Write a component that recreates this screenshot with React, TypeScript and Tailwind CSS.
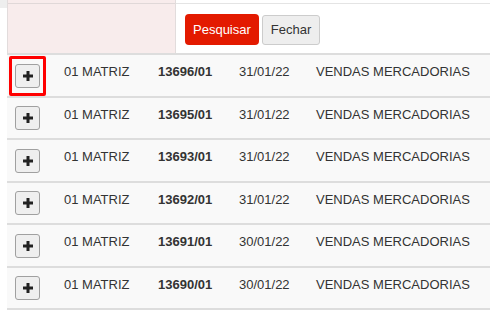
import React from 'react';

const rows = [
  { num: '13696/01', date: '31/01/22' },
  { num: '13695/01', date: '31/01/22' },
  { num: '13693/01', date: '31/01/22' },
  { num: '13692/01', date: '31/01/22' },
  { num: '13691/01', date: '30/01/22' },
  { num: '13690/01', date: '30/01/22' },
];

const PlusIcon = () => (
  <svg width="10" height="10" viewBox="0 0 10 10" className="block">
    <path d="M3.5 0h3v3.5H10v3H6.5V10h-3V6.5H0v-3h3.5z" fill="#222" />
  </svg>
);

export default function App() {
  return (
    <div className="relative w-[490px] h-[315px] overflow-hidden bg-white text-[13px] leading-[18.57px] text-[#333]" style={{ fontFamily: '"Liberation Sans", Arial, sans-serif' }}>
      <div className="flex">
        <div className="w-[7px] shrink-0">
          <div className="h-[8px] bg-[#eeeeee]" />
        </div>
        <div className="flex-1 min-w-0">
          {/* header */}
          <div className="flex h-[55px] border-b-2 border-[#dddddd]">
            <div className="w-[169px] shrink-0 bg-[#f8ecec] border-l border-r border-[#e2dcdc] pt-[3px]">
              <div className="h-full border-t border-[#e0d8d8]" />
            </div>
            <div className="flex-1 pt-[3px]">
              <div className="h-full border-t border-[#e4e4e4] pl-[9px] pt-[10px] flex items-start gap-[3px]">
                <button className="h-[31px] px-[8px] rounded-[4px] bg-[#e31a00] text-white leading-[31px]">Pesquisar</button>
                <button className="h-[30px] mt-px px-[8px] rounded-[3px] bg-[#eeeeee] border border-[#cccccc] text-[#333]">Fechar</button>
              </div>
            </div>
          </div>

          {/* rows */}
          {rows.map((r, i) => (
            <div key={i} className="relative flex items-start h-[42.5px] border-b-2 border-[#dddddd] bg-[#f9f9f9]">
              <div className="w-[49px] shrink-0 pl-[8px] pt-[8.5px]">
                <button className="w-[25px] h-[24px] flex items-center justify-center rounded-[3px] bg-[#efefef] border border-[#a0a0a0]">
                  <PlusIcon />
                </button>
              </div>
              <div className="w-[94px] shrink-0 pl-[8px] pt-[8px]">01 MATRIZ</div>
              <div className="w-[81px] shrink-0 pl-[8px] pt-[8px] font-bold">{r.num}</div>
              <div className="w-[77px] shrink-0 pl-[8px] pt-[8px]">{r.date}</div>
              <div className="flex-1 pl-[8px] pt-[8px] whitespace-nowrap">VENDAS MERCADORIAS</div>
              {i === 0 && (
                <div className="absolute left-[2px] top-[1px] w-[37px] h-[40px] border-[3px] border-[#ff0000] rounded-[2px]" />
              )}
            </div>
          ))}
        </div>
      </div>
    </div>
  );
}
